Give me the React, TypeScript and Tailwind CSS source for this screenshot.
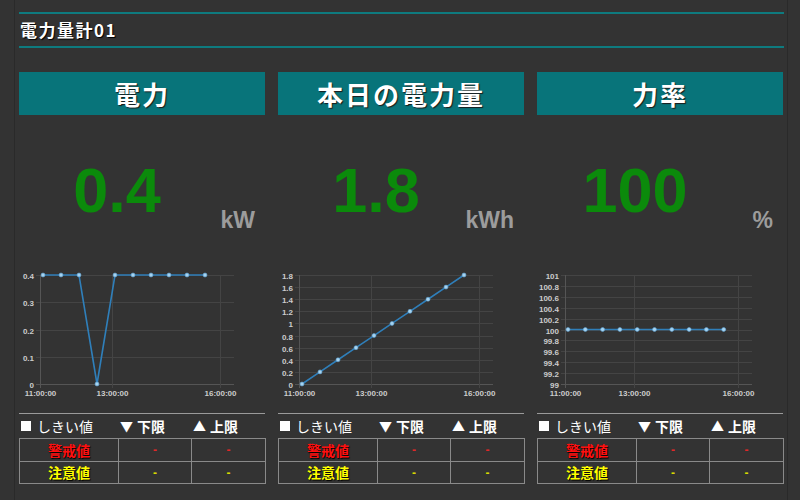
import React from 'react';

type ChartSpec = {
  left: number;
  hour: number;
  ticks: string[];
  values: number[];
  min: number;
  max: number;
};

type Meter = {
  title: string;
  value: string;
  unit: string;
  chart: ChartSpec;
};

const meters: Meter[] = [
  {
    title: '電力',
    value: '0.4',
    unit: 'kW',
    chart: {
      left: 21,
      hour: 36,
      ticks: ['0.4', '0.3', '0.2', '0.1', '0'],
      values: [0.4, 0.4, 0.4, 0, 0.4, 0.4, 0.4, 0.4, 0.4, 0.4],
      min: 0,
      max: 0.4,
    },
  },
  {
    title: '本日の電力量',
    value: '1.8',
    unit: 'kWh',
    chart: {
      left: 21,
      hour: 36,
      ticks: ['1.8', '1.6', '1.4', '1.2', '1', '0.8', '0.6', '0.4', '0.2', '0'],
      values: [0, 0.2, 0.4, 0.6, 0.8, 1, 1.2, 1.4, 1.6, 1.8],
      min: 0,
      max: 1.8,
    },
  },
  {
    title: '力率',
    value: '100',
    unit: '%',
    chart: {
      left: 28,
      hour: 34.6,
      ticks: ['101', '100.8', '100.6', '100.4', '100.2', '100', '99.8', '99.6', '99.4', '99.2', '99'],
      values: [100, 100, 100, 100, 100, 100, 100, 100, 100, 100],
      min: 99,
      max: 101,
    },
  },
];

function TrendChart({ left, hour, ticks, values, min, max }: ChartSpec) {
  const top = 9;
  const bottom = 118;
  const right = 215;
  const step = (bottom - top) / (ticks.length - 1);
  const y = (v: number) => bottom - ((v - min) / (max - min)) * (bottom - top);
  const gridX = [left, left + 2 * hour, left + 5 * hour];
  const timeLabels = ['11:00:00', '13:00:00', '16:00:00'];
  const pts = values.map((v, i) => [left + 3 + (i * hour) / 2, y(v)] as const);

  return (
    <svg width={246} height={140} className="block">
      {/* horizontal grid + y ticks */}
      {ticks.map((t, i) => {
        const ty = Math.round(top + i * step) + 0.5;
        return (
          <g key={t}>
            <line x1={left - 4} x2={right} y1={ty} y2={ty} stroke={i === ticks.length - 1 ? '#555' : '#444'} />
            <text
              x={left - 6}
              y={ty + 3}
              textAnchor="end"
              fontSize={8}
              fontWeight={700}
              fill="#cccccc"
              fontFamily="'Liberation Sans', sans-serif"
            >
              {t}
            </text>
          </g>
        );
      })}

      {/* vertical grid + time labels */}
      {gridX.map((gx, i) => {
        const x = Math.round(gx) + 0.5;
        return (
          <g key={timeLabels[i]}>
            <line x1={x} x2={x} y1={top} y2={bottom + 4} stroke={i === 0 ? '#555' : '#444'} />
            <text
              x={x}
              y={130}
              textAnchor="middle"
              fontSize={8}
              fontWeight={700}
              fill="#cccccc"
              fontFamily="'Liberation Sans', sans-serif"
            >
              {timeLabels[i]}
            </text>
          </g>
        );
      })}

      {/* series */}
      <polyline
        points={pts.map(([px, py]) => `${px},${py}`).join(' ')}
        fill="none"
        stroke="#2f7fba"
        strokeWidth={1.6}
      />
      {pts.map(([px, py], i) => (
        <circle key={i} cx={px} cy={py} r={2} fill="#a6d3f0" stroke="#5c9fd0" strokeWidth={0.6} />
      ))}
    </svg>
  );
}

function ThresholdTable() {
  return (
    <div>
      {/* Legend */}
      <div className="grid h-[24px] grid-cols-[99px_73px_74px] items-center text-[14px] text-white">
        <div className="flex items-center gap-[6px] pl-[2px]">
          <span className="block h-[10px] w-[10px] bg-white" />
          <span className="font-normal">しきい値</span>
        </div>
        <div className="flex items-center gap-[4px] pl-[2px] font-bold">
          <span className="text-[13px]">▼</span>
          <span>下限</span>
        </div>
        <div className="flex items-center gap-[4px] pl-[2px] font-bold">
          <span className="text-[13px]">▲</span>
          <span>上限</span>
        </div>
      </div>

      {/* Table */}
      <table className="w-[246px] table-fixed border-collapse">
        <colgroup>
          <col className="w-[99px]" />
          <col className="w-[73px]" />
          <col className="w-[74px]" />
        </colgroup>
        <tbody>
          <tr className="h-[23px]">
            <td className="border border-[#8a8a8a] text-center text-[14px] font-bold text-[#ff1010] [text-shadow:1px_1px_1px_#000]">
              警戒値
            </td>
            <td className="border border-[#8a8a8a] text-center font-[family-name:'Liberation_Sans',sans-serif] text-[12px] font-bold text-[#e02828]">-</td>
            <td className="border border-[#8a8a8a] text-center font-[family-name:'Liberation_Sans',sans-serif] text-[12px] font-bold text-[#e02828]">-</td>
          </tr>
          <tr className="h-[22px]">
            <td className="border border-[#8a8a8a] text-center text-[14px] font-bold text-[#ffff00] [text-shadow:1px_1px_1px_#000]">
              注意値
            </td>
            <td className="border border-[#8a8a8a] text-center font-[family-name:'Liberation_Sans',sans-serif] text-[12px] font-bold text-[#d8d800]">-</td>
            <td className="border border-[#8a8a8a] text-center font-[family-name:'Liberation_Sans',sans-serif] text-[12px] font-bold text-[#d8d800]">-</td>
          </tr>
        </tbody>
      </table>
    </div>
  );
}

function MeterPanel({ meter }: { meter: Meter }) {
  return (
    <div className="flex flex-col">
      {/* Header */}
      <div className="flex h-[43px] items-center justify-center bg-[#08747a] text-[26px] font-bold tracking-[2px] text-white [text-shadow:1px_1px_1px_#1a1a1a]">
        {meter.title}
      </div>

      {/* Value + unit */}
      <div className="flex h-[151px] pt-[44px]">
        <div className="w-[196px] shrink-0 text-center font-[family-name:'Liberation_Sans',sans-serif] text-[63px] font-bold leading-none text-[#0b8a0b]">
          {meter.value}
        </div>
        <div className="flex min-w-0 flex-1 justify-end pr-[10px] pt-[50px]">
          <span className="whitespace-nowrap font-[family-name:'Liberation_Sans',sans-serif] text-[23px] font-bold leading-none text-[#9c9c9c]">
            {meter.unit}
          </span>
        </div>
      </div>

      {/* Trend chart */}
      <TrendChart {...meter.chart} />

      {/* Thresholds */}
      <div className="mt-[7px] h-px bg-[#9a9a9a]" />
      <ThresholdTable />
    </div>
  );
}

export default function App() {
  return (
    <div className="h-[500px] w-[800px] overflow-hidden bg-[#333333] font-[family-name:'Noto_Sans_CJK_JP','Noto_Sans',sans-serif]">
      <div className="ml-[14px] h-full w-[774px] border-x border-[#2a2a2a] pl-[4px] pr-[3px] pt-[12px]">
        <div className="h-[2px] bg-[#0e7b7f]" />
        <div className="flex h-[32px] items-center pl-[1px] text-[17px] font-bold tracking-[1.5px] text-white [text-shadow:1px_1px_1px_#000]">
          電力量計01
        </div>
        <div className="h-[2px] bg-[#0e7b7f]" />

        <div className="mt-[24px] grid grid-cols-[246px_246px_246px] gap-x-[13px]">
          {meters.map((m) => (
            <MeterPanel key={m.title} meter={m} />
          ))}
        </div>
      </div>
    </div>
  );
}
